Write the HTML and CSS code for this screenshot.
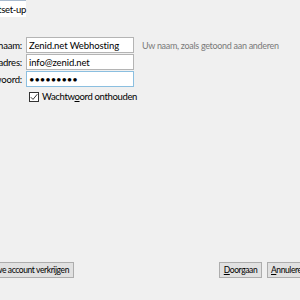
FILE: index.html
```html
<!DOCTYPE html>
<html lang="nl">
<head>
    <meta charset="UTF-8">
    <meta name="viewport" content="width=device-width, initial-scale=1.0">
    <title>Mailaccountset-up</title>
    <link rel="stylesheet" href="styles.css">
</head>
<body>
    <div class="titlebar">
        <span class="title">Mailaccountset-up</span>
    </div>

    <div class="dialog">
        <div class="form">
            <label class="label" for="name">Uw naam:</label>
            <input class="field" type="text" id="name" value="Zenid.net Webhosting">
            <span class="hint">Uw naam, zoals getoond aan anderen</span>

            <label class="label" for="email">E-mailadres:</label>
            <input class="field" type="text" id="email" value="info@zenid.net">
            <span class="hint"></span>

            <label class="label" for="password">Wachtwoord:</label>
            <input class="field focused" type="password" id="password" value="geheim123">
            <span class="hint"></span>

            <span class="label"></span>
            <label class="remember">
                <span class="checkbox">
                    <svg width="8" height="8" viewBox="0 0 8 8"><path d="M0.8 4.2 L3 6.4 L7.3 1.2" fill="none" stroke="#333" stroke-width="1"/></svg>
                </span>
                <span>Wachtw<u>o</u>ord onthouden</span>
            </label>
        </div>

        <div class="buttons">
            <div class="left">
                <button class="btn">Nieuwe account verkrijgen</button>
            </div>
            <div class="right">
                <button class="btn"><u>D</u>oorgaan</button>
                <button class="btn"><u>A</u>nnuleren</button>
            </div>
        </div>
    </div>
</body>
</html>
```

FILE: styles.css
```css
body {
    margin: 0;
    width: 300px;
    height: 300px;
    overflow: hidden;
    background-color: #f0f0f0;
    font-family: Lato, "Noto Sans", sans-serif;
    font-size: 9.5px;
    letter-spacing: -0.2px;
    color: #000;
}
.titlebar {
    height: 16px;
    border-top: 1px solid #a9bbcf;
    background: #fff;
    display: flex;
    justify-content: flex-end;
    width: 26px;
    font-size: 9.5px;
    letter-spacing: -0.3px;
    line-height: 17px;
    white-space: nowrap;
}
.dialog {
    height: 283px;
    display: flex;
    flex-direction: column;
    justify-content: space-between;
}
.form {
    display: grid;
    grid-template-columns: 22px 108px auto;
    column-gap: 4px;
    row-gap: 1px;
    padding-top: 20px;
    align-items: center;
}
.label {
    display: flex;
    justify-content: flex-end;
    white-space: nowrap;
}
.field {
    height: 16px;
    box-sizing: border-box;
    margin: 0;
    padding: 0 2px;
    border: 1px solid #b4b4b4;
    background: #fff;
    font-family: inherit;
    font-size: 9.5px;
    letter-spacing: -0.1px;
    color: #000;
    outline: none;
}
.field.focused {
    border-color: #8bbfe0;
}
.hint {
    color: #7a7a7a;
    font-size: 9px;
    letter-spacing: -0.3px;
    padding-left: 4px;
    white-space: nowrap;
}
.remember {
    grid-column: 2 / 4;
    display: flex;
    align-items: center;
    gap: 3px;
    padding: 3px 0 0 3px;
    letter-spacing: -0.35px;
}
.checkbox {
    box-sizing: border-box;
    width: 10px;
    height: 10px;
    border: 1px solid #333;
    background: #fff;
    display: flex;
    align-items: center;
    justify-content: center;
}
.buttons {
    display: flex;
    justify-content: space-between;
    padding-bottom: 22px;
}
.left {
    display: flex;
    justify-content: flex-end;
    width: 74px;
    white-space: nowrap;
}
.right {
    display: flex;
    gap: 5px;
    width: 81px;
    white-space: nowrap;
    overflow: hidden;
}
.btn {
    height: 16px;
    padding: 0 4px;
    margin: 0;
    background: #e1e1e1;
    border: 1px solid #adadad;
    font-family: inherit;
    font-size: 8.5px;
    letter-spacing: -0.4px;
    color: #000;
    flex-shrink: 0;
}
.right .btn {
    width: 43px;
    padding: 0;
}
```
